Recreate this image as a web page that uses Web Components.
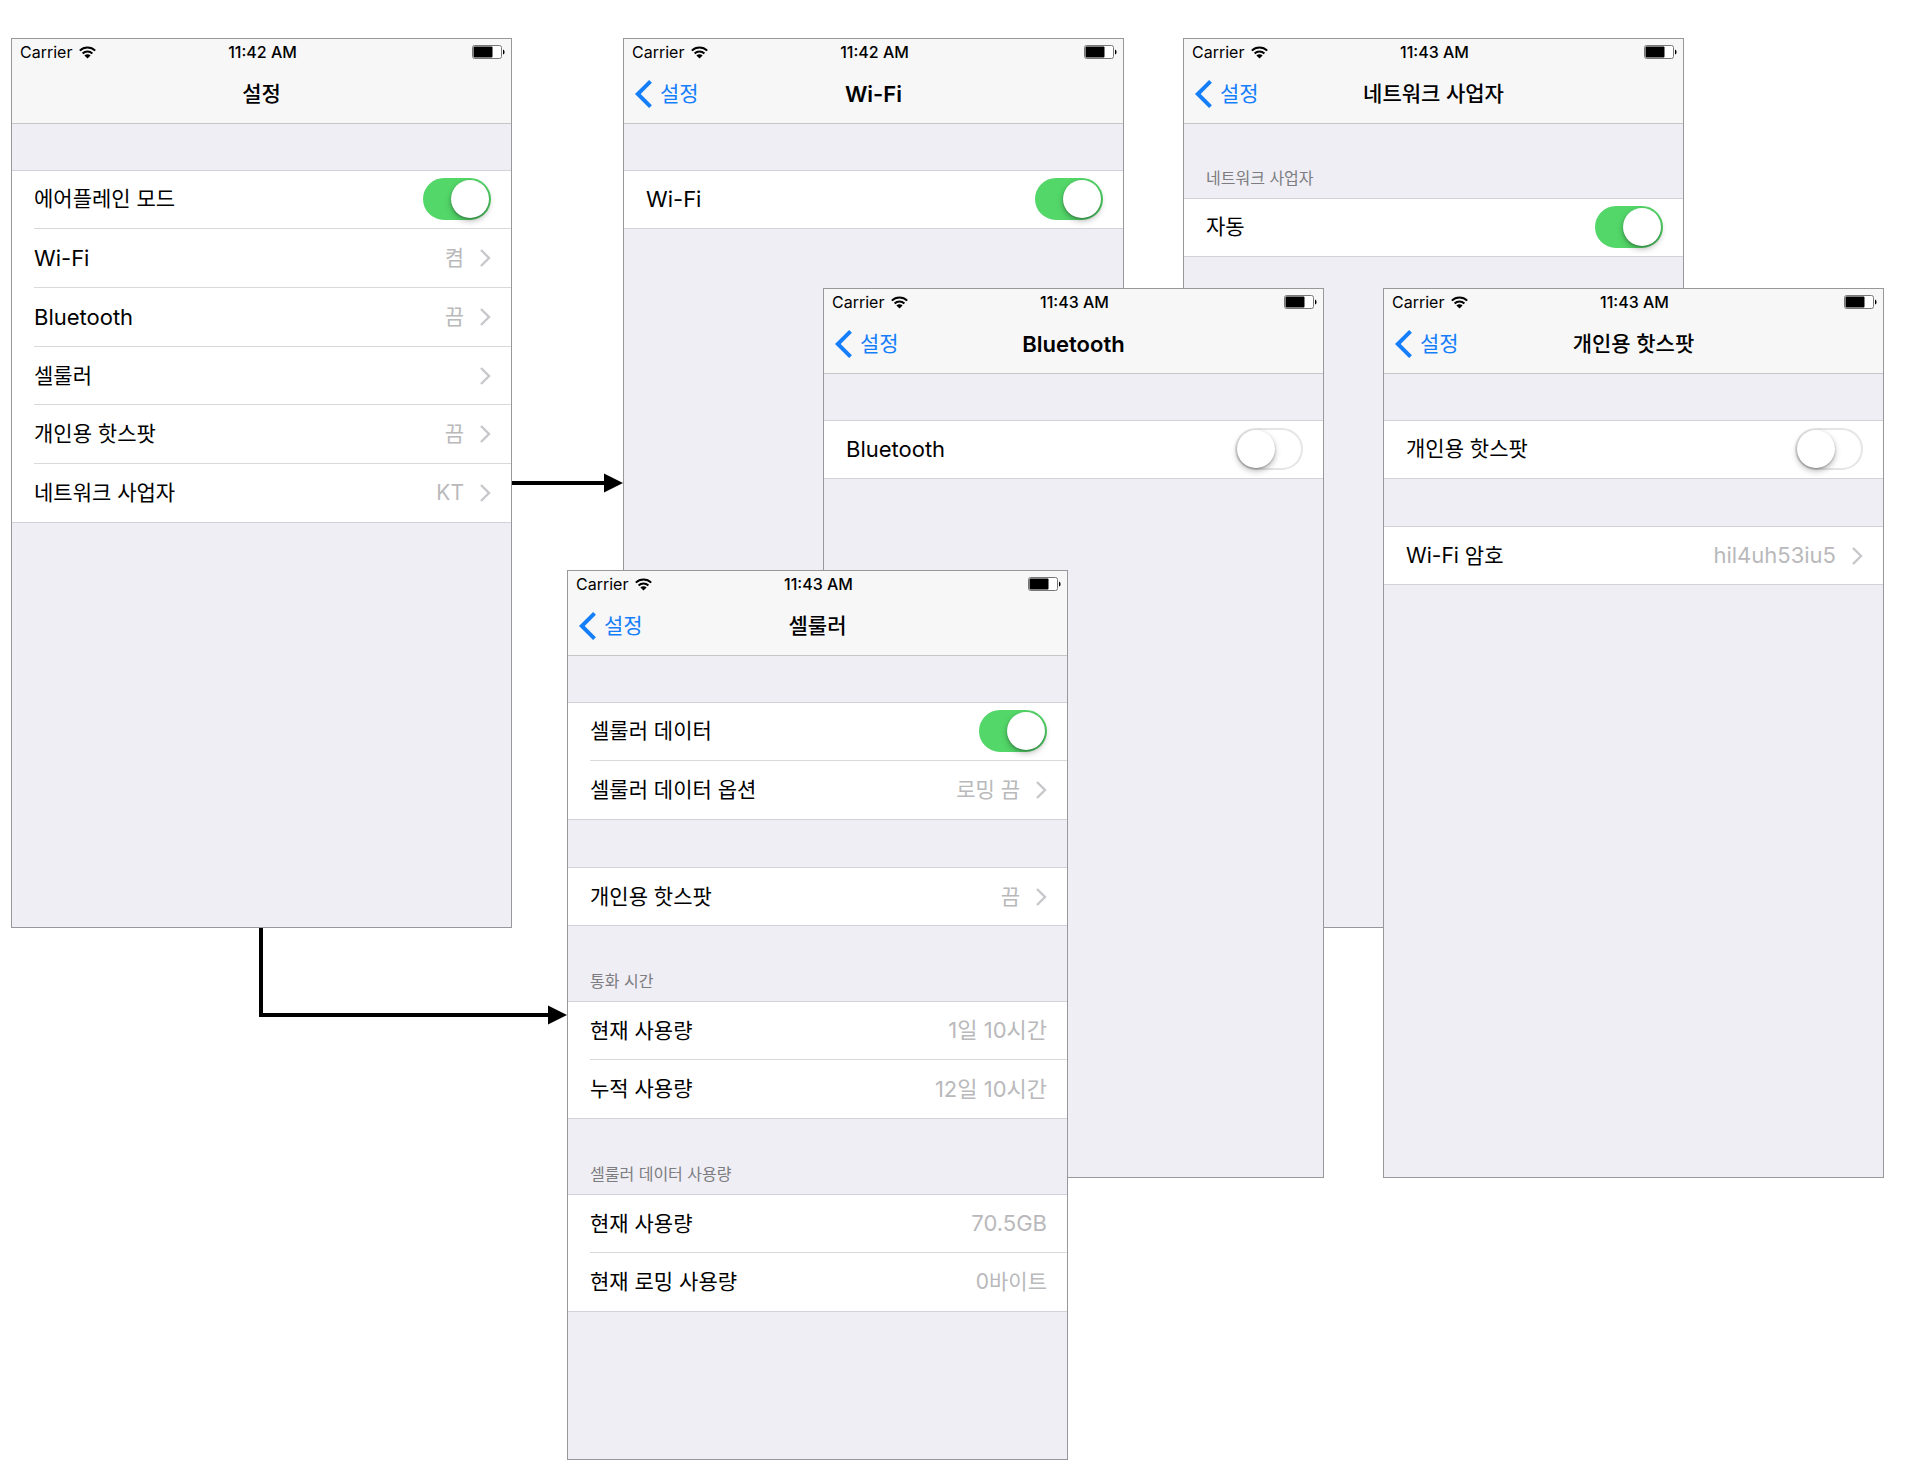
<!DOCTYPE html>
<html lang="ko">
<head>
<meta charset="utf-8">
<meta name="viewport" content="width=device-width, initial-scale=1">
<title>설정</title>
<style>
  body {
    margin: 0;
    background: #fff;
    color: #000;
    font-family: Inter, "Noto Sans CJK KR", sans-serif;
  }
  .latin { font-size: 22px; }
</style>
</head>
<body>

<flow-canvas>
  <flow-arrow style="--x: 512px; --y: 473px" kind="straight"></flow-arrow>
  <flow-arrow style="--x: 259px; --y: 928px" kind="elbow"></flow-arrow>

  <phone-screen style="--x: 11px; --y: 38px" time="11:42 AM">
    <span slot="title">설정</span>
    <setting-group>
      <setting-row kind="switch" checked>에어플레인 모드</setting-row>
      <setting-row kind="link"><span class="latin">Wi-Fi</span><span slot="value">켬</span></setting-row>
      <setting-row kind="link"><span class="latin">Bluetooth</span><span slot="value">끔</span></setting-row>
      <setting-row kind="link">셀룰러</setting-row>
      <setting-row kind="link">개인용 핫스팟<span slot="value">끔</span></setting-row>
      <setting-row kind="link">네트워크 사업자<span slot="value">KT</span></setting-row>
    </setting-group>
  </phone-screen>

  <phone-screen style="--x: 623px; --y: 38px" time="11:42 AM" back="설정">
    <span slot="title" class="latin">Wi-Fi</span>
    <setting-group>
      <setting-row kind="switch" checked><span class="latin">Wi-Fi</span></setting-row>
    </setting-group>
  </phone-screen>

  <phone-screen style="--x: 1183px; --y: 38px" time="11:43 AM" back="설정">
    <span slot="title">네트워크 사업자</span>
    <setting-group heading="네트워크 사업자">
      <setting-row kind="switch" checked>자동</setting-row>
    </setting-group>
  </phone-screen>

  <phone-screen style="--x: 823px; --y: 288px" time="11:43 AM" back="설정">
    <span slot="title" class="latin">Bluetooth</span>
    <setting-group>
      <setting-row kind="switch"><span class="latin">Bluetooth</span></setting-row>
    </setting-group>
  </phone-screen>

  <phone-screen style="--x: 1383px; --y: 288px" time="11:43 AM" back="설정">
    <span slot="title">개인용 핫스팟</span>
    <setting-group>
      <setting-row kind="switch">개인용 핫스팟</setting-row>
    </setting-group>
    <setting-group>
      <setting-row kind="link">Wi-Fi 암호<span slot="value" class="latin">hil4uh53iu5</span></setting-row>
    </setting-group>
  </phone-screen>

  <phone-screen style="--x: 567px; --y: 570px" time="11:43 AM" back="설정">
    <span slot="title">셀룰러</span>
    <setting-group>
      <setting-row kind="switch" checked>셀룰러 데이터</setting-row>
      <setting-row kind="link">셀룰러 데이터 옵션<span slot="value">로밍 끔</span></setting-row>
    </setting-group>
    <setting-group>
      <setting-row kind="link">개인용 핫스팟<span slot="value">끔</span></setting-row>
    </setting-group>
    <setting-group heading="통화 시간">
      <setting-row>현재 사용량<span slot="value" class="latin">1일 10시간</span></setting-row>
      <setting-row>누적 사용량<span slot="value" class="latin">12일 10시간</span></setting-row>
    </setting-group>
    <setting-group heading="셀룰러 데이터 사용량">
      <setting-row>현재 사용량<span slot="value" class="latin">70.5GB</span></setting-row>
      <setting-row>현재 로밍 사용량<span slot="value">0바이트</span></setting-row>
    </setting-group>
  </phone-screen>
</flow-canvas>

<script>
  class BaseElement extends HTMLElement {
    connectedCallback() {
      if (this.shadowRoot) return;
      this.attachShadow({ mode: 'open' }).innerHTML = this.render();
    }
  }

  /* Free canvas: screens and arrows are placed by --x / --y */
  class FlowCanvas extends BaseElement {
    render() {
      return `
        <style>
          :host { display: block; position: relative; min-height: 100vh; overflow: hidden; }
          ::slotted(*) { position: absolute; left: var(--x); top: var(--y); }
        </style>
        <slot></slot>`;
    }
  }

  class FlowArrow extends BaseElement {
    render() {
      const straight = `<svg width="111" height="20" viewBox="0 0 111 20" aria-hidden="true">
          <path d="M0 10H95" stroke="#000" stroke-width="4"/><path d="M92 .5L111 10L92 19.5Z"/></svg>`;
      const elbow = `<svg width="308" height="97" viewBox="0 0 308 97" aria-hidden="true">
          <path d="M2 0V87H292" fill="none" stroke="#000" stroke-width="4"/><path d="M289 77.500L308 87L289 96.500Z"/></svg>`;
      return `
        <style>:host { display: block; } svg { display: block; }</style>
        ${this.getAttribute('kind') === 'elbow' ? elbow : straight}`;
    }
  }

  class StatusBar extends BaseElement {
    render() {
      return `
        <style>
          :host {
            display: grid; grid-template-columns: 1fr auto 1fr; align-items: center;
            height: 26px; padding: 0 6px 0 8px; font-size: 16px; line-height: 20px;
          }
          .carrier { display: flex; align-items: center; gap: 7px; }
          .time { font-weight: 500; }
          .battery { justify-self: end; }
          svg { display: block; }
        </style>
        <span class="carrier">Carrier
          <svg width="17" height="13" viewBox="0 0 17 13" aria-hidden="true">
            <g fill="none" stroke="#000" stroke-width="2">
              <path d="M.8 4.600A11 11 0 0 1 16.200 4.600"/>
              <path d="M3.600 7.500A7 7 0 0 1 13.400 7.500"/>
            </g>
            <path d="M8.500 12.600L5.400 9.500A4.400 4.400 0 0 1 11.600 9.500Z"/>
          </svg>
        </span>
        <span class="time">${this.getAttribute('time')}</span>
        <svg class="battery" width="33" height="14" viewBox="0 0 33 14" aria-hidden="true">
          <rect x=".5" y=".5" width="29" height="13" rx="2" fill="#fff" stroke="#777"/>
          <rect x="1.500" y="1.500" width="19" height="11" rx="1"/>
          <path d="M31 4.500Q32.600 5 32.600 7T31 9.500Z"/>
        </svg>`;
    }
  }

  class PhoneScreen extends BaseElement {
    render() {
      const back = this.getAttribute('back');
      return `
        <style>
          :host {
            display: block; box-sizing: border-box; width: 501px; min-height: 890px;
            border: 1px solid #98989b; background: #efeef4;
          }
          header { background: #f7f7f7; border-bottom: 1px solid #c6c6ca; }
          nav {
            display: grid; grid-template-columns: 1fr auto 1fr; align-items: center;
            height: 58px; padding: 0 11px; font-size: 21px; line-height: 30px;
          }
          h1 { grid-column: 2; margin: 0; font-size: inherit; font-weight: 500; }
          ::slotted(.latin) { font-weight: 600; }
          button {
            display: flex; align-items: center; gap: 8px; justify-self: start;
            border: 0; padding: 0; background: none; color: #157efb; font: inherit; cursor: pointer;
          }
          svg { display: block; }
        </style>
        <header>
          <status-bar time="${this.getAttribute('time')}"></status-bar>
          <nav>
            ${back ? `<button type="button">
              <svg width="17" height="28" viewBox="0 0 17 28" aria-hidden="true">
                <path d="M15.500 1.400L2.800 14L15.500 26.600" fill="none" stroke="currentColor" stroke-width="4"/>
              </svg>${back}</button>` : ''}
            <h1><slot name="title"></slot></h1>
          </nav>
        </header>
        <main><slot></slot></main>`;
    }
  }

  class SettingGroup extends BaseElement {
    render() {
      const heading = this.getAttribute('heading');
      return `
        <style>
          :host { display: block; margin-top: 47px; }
          :host(:nth-of-type(1)) { margin-top: 0; padding-top: 46px; }
          h2 {
            margin: 0; padding: 0 22px 12px; font-size: 16px; line-height: 16px;
            font-weight: 400; color: #7c7c81;
          }
          .rows { border-top: 1px solid #d3d2d8; background: #fff; }
          ::slotted(*) { height: 59px; }
          ::slotted(:nth-child(3n + 1)) { height: 58px; }
        </style>
        ${heading ? `<h2>${heading}</h2>` : ''}
        <div class="rows"><slot></slot></div>`;
    }
  }

  class SettingRow extends BaseElement {
    render() {
      const kind = this.getAttribute('kind');
      const text = '<span class="text"><slot></slot></span>';
      const value = '<span class="value"><slot name="value"></slot></span>';
      let body = `<div class="cell">${text}${value}</div>`;
      if (kind === 'switch') {
        body = `<label class="cell switch" for="toggle">${text}
          <input id="toggle" type="checkbox" role="switch" ${this.hasAttribute('checked') ? 'checked' : ''}></label>`;
      } else if (kind === 'link') {
        body = `<a class="cell" href="#">${text}${value}
          <svg width="11" height="18" viewBox="0 0 11 18" aria-hidden="true">
            <path d="M1 1L9 9L1 17" fill="none" stroke="#c7c7cc" stroke-width="2.400"/>
          </svg></a>`;
      }
      return `
        <style>
          :host { display: block; box-sizing: border-box; padding-left: 22px; font-size: 21px; line-height: 30px; }
          :host(:last-child) { padding-left: 0; border-bottom: 1px solid #d3d2d8; }
          .cell {
            display: flex; align-items: center; box-sizing: border-box; height: 100%;
            padding-right: 20px; border-bottom: 1px solid #d9d9dc;
            color: inherit; text-decoration: none;
          }
          .switch { padding-bottom: 1px; }
          :host(:last-child) .cell { padding-left: 22px; border-bottom: 0; }
          .text { flex: 1; }
          .value { color: #b9b9bb; }
          svg { display: block; margin-left: 16px; }
          input {
            appearance: none; position: relative; flex: none; box-sizing: border-box;
            width: 68px; height: 42px; margin: 0; border-radius: 21px;
            border: 2px solid #e5e5e5; background: #fff;
          }
          input::before {
            content: ""; display: block; width: 38px; height: 38px; border-radius: 50%;
            background: #fff; box-shadow: 0 3px 6px rgba(0, 0, 0, .28), 0 1px 2px rgba(0, 0, 0, .25);
          }
          input:checked { border-color: #53d769; background: #53d769; }
          input:checked::before { margin-left: 26px; }
        </style>
        ${body}`;
    }
  }

  customElements.define('flow-canvas', FlowCanvas);
  customElements.define('flow-arrow', FlowArrow);
  customElements.define('status-bar', StatusBar);
  customElements.define('phone-screen', PhoneScreen);
  customElements.define('setting-group', SettingGroup);
  customElements.define('setting-row', SettingRow);
</script>
</body>
</html>
